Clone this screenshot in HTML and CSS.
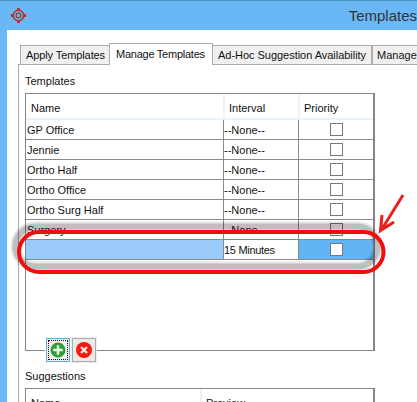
FILE: index.html
```html
<!DOCTYPE html>
<html lang="en">
<head>
    <meta charset="UTF-8">
    <title>Templates</title>
    <link rel="stylesheet" href="styles.css">
</head>
<body>
    <div class="window">
        <div class="titlebar">
            <svg class="app-icon" width="17" height="17" viewBox="0 0 18 18">
                <circle cx="9" cy="9" r="5.5" fill="none" stroke="#b5302a" stroke-width="1.6"/>
                <circle cx="9" cy="9" r="2.5" fill="none" stroke="#b5302a" stroke-width="1.4"/>
                <path d="M7.5 1h3v3h-3zM7.5 14h3v3h-3zM1 7.5h3v3H1zM14 7.5h3v3h-3z" fill="#b5302a"/>
            </svg>
            <span class="title">Templates</span>
        </div>
        <div class="content">
            <div class="tabs">
                <div class="tab tab-first">Apply Templates</div>
                <div class="tab active">Manage Templates</div>
                <div class="tab tab-adhoc">Ad-Hoc Suggestion Availability</div>
                <div class="tab tab-last">Manage</div>
            </div>
            <div class="pane">
                <div class="label">Templates</div>
                <div class="grid">
                    <div class="row head">
                        <div class="cell name">Name</div>
                        <div class="cell interval">Interval</div>
                        <div class="cell priority">Priority</div>
                    </div>
                    <div class="row">
                        <div class="cell name">GP Office</div>
                        <div class="cell interval">--None--</div>
                        <div class="cell priority"><span class="check"></span></div>
                    </div>
                    <div class="row">
                        <div class="cell name">Jennie</div>
                        <div class="cell interval">--None--</div>
                        <div class="cell priority"><span class="check"></span></div>
                    </div>
                    <div class="row">
                        <div class="cell name">Ortho Half</div>
                        <div class="cell interval">--None--</div>
                        <div class="cell priority"><span class="check"></span></div>
                    </div>
                    <div class="row">
                        <div class="cell name">Ortho Office</div>
                        <div class="cell interval">--None--</div>
                        <div class="cell priority"><span class="check"></span></div>
                    </div>
                    <div class="row">
                        <div class="cell name">Ortho Surg Half</div>
                        <div class="cell interval">--None--</div>
                        <div class="cell priority"><span class="check"></span></div>
                    </div>
                    <div class="row">
                        <div class="cell name">Surgery</div>
                        <div class="cell interval">--None--</div>
                        <div class="cell priority"><span class="check"></span></div>
                    </div>
                    <div class="row selected">
                        <div class="cell name"></div>
                        <div class="cell interval">15 Minutes</div>
                        <div class="cell priority"><span class="check"></span></div>
                    </div>
                    <div class="buttons">
                        <div class="btn btn-focus">
                            <svg width="16" height="16" viewBox="0 0 16 16">
                                <circle cx="8" cy="8" r="7.5" fill="#2f9e36"/>
                                <path d="M6.7 3.2h2.6v3.5h3.5v2.6H9.3v3.5H6.7V9.3H3.2V6.7h3.5z" fill="#e4f4e4"/>
                            </svg>
                        </div>
                        <div class="btn btn-remove">
                            <svg width="16" height="16" viewBox="0 0 16 16">
                                <circle cx="8" cy="8" r="8" fill="#f5180c"/>
                                <path d="M5 5l6 6M11 5l-6 6" stroke="#fbe6e0" stroke-width="2.4" fill="none"/>
                            </svg>
                        </div>
                    </div>
                </div>
                <div class="label label-second">Suggestions</div>
                <div class="grid grid-second">
                    <div class="row head">
                        <div class="cell name-second">Name</div>
                        <div class="cell preview">Preview</div>
                    </div>
                </div>
            </div>
        </div>
        <!-- hand drawn callout on top of the screenshot -->
        <svg class="markup" width="417" height="402" viewBox="0 0 417 402">
            <rect x="15.500" y="226.500" width="362" height="40" rx="20" fill="none" stroke="#000" stroke-opacity="0.1" stroke-width="10"/>
            <rect x="15.500" y="226.500" width="362" height="40" rx="20" fill="none" stroke="#000" stroke-opacity="0.17" stroke-width="6"/>
            <rect x="19" y="232" width="364.500" height="40" rx="20" fill="none" stroke="#f00d0d" stroke-width="4"/>
            <path d="M403 195L382 229M382 215L380.500 230.500L394 222" fill="none" stroke="#e9211e" stroke-width="3"/>
        </svg>
    </div>
</body>
</html>
```

FILE: styles.css
```css
html, body {
    margin: 0;
    padding: 0;
    height: 402px;
    overflow: hidden;
}
body {
    font-family: "Liberation Sans", Arial, sans-serif;
    font-size: 11px;
    color: #111;
    background: #fff;
}
.window {
    position: relative;
    width: 417px;
    height: 402px;
    overflow: hidden;
    box-sizing: border-box;
    background: #69b8f5;
    border-top: 1px solid #4f94c4;
    padding-left: 7px;
}
.titlebar {
    height: 29px;
    margin-left: -7px;
    display: flex;
    align-items: center;
    justify-content: space-between;
}
.app-icon {
    margin-left: 10px;
    margin-top: -1px;
}
.title {
    font-size: 15px;
    color: #333;
    margin-top: -1px;
}
.content {
    background: #fff;
    height: 372px;
    padding-top: 13px;
    box-sizing: border-box;
}
.tabs {
    display: flex;
    align-items: flex-end;
    height: 21px;
    margin-left: 13px;
    position: relative;
}
.tab {
    height: 19px;
    box-sizing: border-box;
    border: 1px solid #aeaaaa;
    border-bottom: none;
    background: #f0f0f0;
    line-height: 19px;
    padding: 0 5px;
    white-space: nowrap;
}
.tab-first {
    width: 90px;
    letter-spacing: -0.1px;
}
.tab.active {
    height: 22px;
    width: 104px;
    margin: 0 -1px -1px;
    background: #fff;
    line-height: 20px;
    position: relative;
    z-index: 1;
    padding-left: 6px;
    letter-spacing: -0.25px;
}
.tab-adhoc {
    width: 160px;
    letter-spacing: -0.03px;
}
.tab-last {
    flex: 1;
    margin-right: -20px;
    padding-left: 4px;
}
.pane {
    margin-left: 11px;
    border-left: 1px solid #aeaaaa;
    border-top: 1px solid #aeaaaa;
    height: 340px;
    padding: 9px 0 0 6px;
    box-sizing: border-box;
}
.label {
    height: 19px;
    line-height: 14px;
}
.grid {
    position: relative;
    width: 350px;
    height: 258px;
    box-sizing: border-box;
    border: 1px solid #87848f;
    border-right-width: 2px;
}
.row {
    display: flex;
    height: 20px;
    box-sizing: border-box;
    border-bottom: 1px solid #8a8a8a;
    background: #fff;
}
.row.head {
    height: 26px;
    border-bottom: 2px solid #e9f3fb;
    align-items: flex-start;
}
.cell {
    box-sizing: border-box;
    line-height: 21px;
    padding-left: 1px;
    white-space: nowrap;
}
.name {
    width: 197px;
}
.interval {
    width: 75px;
    padding-left: 0;
    border-left: 1px solid #8a8a8a;
}
.selected .interval {
    letter-spacing: -0.3px;
}
.priority {
    flex: 1;
    border-left: 1px solid #8a8a8a;
    display: flex;
    justify-content: center;
    align-items: center;
    height: 19px;
}
.head .cell {
    height: 24px;
    line-height: 28px;
    padding-left: 5px;
}
.head .interval, .head .priority, .head .preview {
    border-left: 2px solid #e9f3fb;
    justify-content: flex-start;
    padding-left: 4px;
}
.head .priority {
    align-items: flex-start;
}
.check {
    width: 11px;
    height: 11px;
    border: 1px solid #777;
    background: #fff;
}
.selected .name {
    background: #9bcbfb;
}
.selected .priority {
    background: #62b5f5;
}
.buttons {
    position: absolute;
    left: 19px;
    bottom: -12px;
    display: flex;
    gap: 2px;
    background: #fff;
    padding: 0 1px;
}
.btn {
    width: 24px;
    height: 24px;
    box-sizing: border-box;
    border: 1px solid #aeaaaa;
    background: #eaeaea;
    display: flex;
    align-items: center;
    justify-content: center;
}
.btn-focus {
    border-color: #64a8e0;
    background: #f0f0f0;
    outline: 1px dotted #111;
    outline-offset: -3px;
}
.btn-remove {
    box-shadow: 0 0 0 1px #eee;
}
.label-second {
    margin-top: 18px;
}
.grid-second {
    height: 40px;
    border-bottom: none;
}
.name-second {
    width: 174px;
}
.markup {
    position: absolute;
    left: 0;
    top: -1px;
}
```
